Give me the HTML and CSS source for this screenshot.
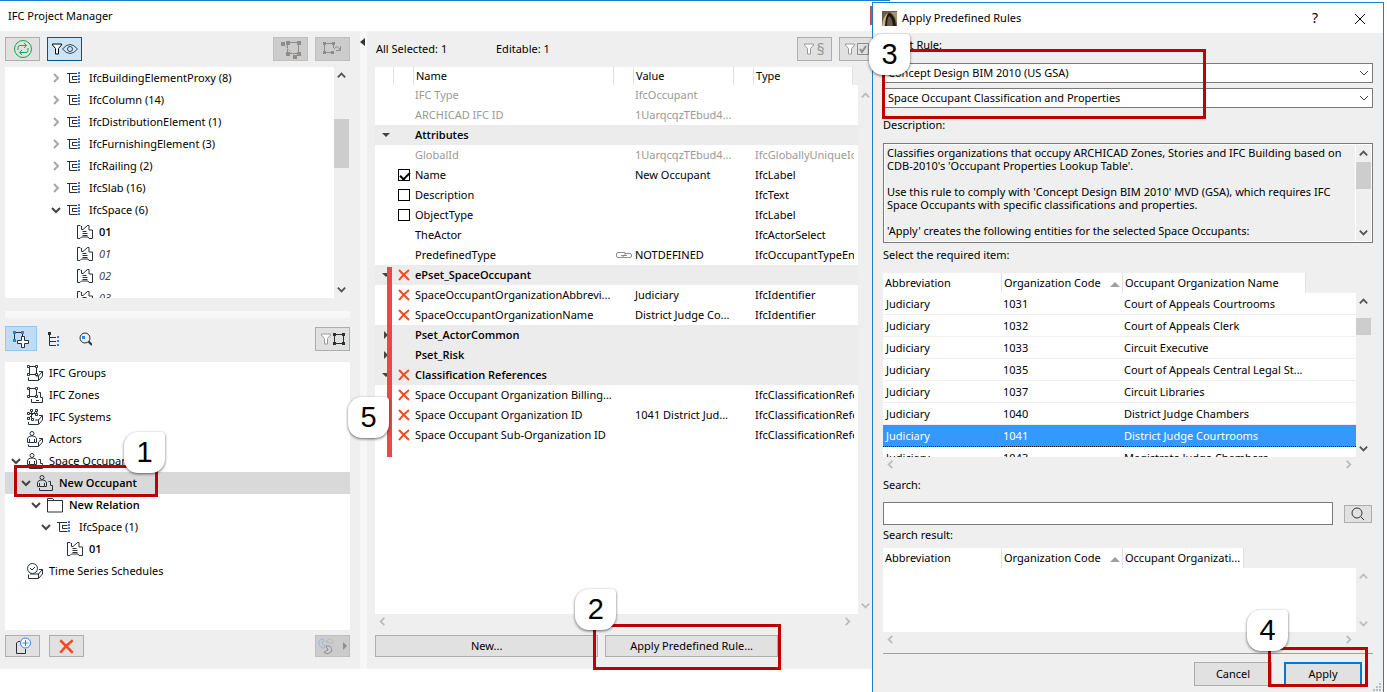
FILE: index.html
```html
<!DOCTYPE html>
<html lang="en">
<head>
  <meta charset="utf-8">
  <title>IFC Project Manager</title>
  <link rel="stylesheet" href="styles.css">
</head>
<body>
  <!-- Shared icons -->
  <svg class="sprite" aria-hidden="true">
    <symbol id="right" viewBox="0 0 12 12"><path d="M4 2l4 4-4 4" fill="none" stroke="currentColor" stroke-width="2"/></symbol>
    <symbol id="left" viewBox="0 0 12 12"><path d="M8 2L4 6l4 4" fill="none" stroke="currentColor" stroke-width="2"/></symbol>
    <symbol id="down" viewBox="0 0 12 12"><path d="M2 4l4 4 4-4" fill="none" stroke="currentColor" stroke-width="2"/></symbol>
    <symbol id="up" viewBox="0 0 12 12"><path d="M2 8l4-4 4 4" fill="none" stroke="currentColor" stroke-width="2"/></symbol>
    <symbol id="cross" viewBox="0 0 12 12"><path d="M1 1l10 10M11 1C7 4 4 7 1 11" fill="none" stroke="#f9481c" stroke-width="2"/></symbol>
    <symbol id="tri-down" viewBox="0 0 8 8"><path d="M0 2h8L4 6z" fill="#444"/></symbol>
    <symbol id="tri-right" viewBox="0 0 8 8"><path d="M2 0v8l4-4z" fill="#444"/></symbol>
    <symbol id="tree" viewBox="0 0 16 16">
      <path d="M0 3.500h10M2.500 3.500v9h8M5.500 6.500h5M5.500 6v3.500h5" fill="none" stroke="#263238"/>
      <path d="M11 2h2v2h-2zM11 5h2v2h-2zM11 8h2v2h-2zM11 11h2v2h-2z" fill="#2a7fff"/>
    </symbol>
    <symbol id="zone" viewBox="0 0 16 16">
      <path d="M4 2.500L3 1.500H.5v13H3l1.500-1.500H11l1 1.500h3.500V6H12V1.500h-1.500l-1 1M4.500 2v3.500H6L10.500 1.500M5.500 7.500h4M5.500 9.500h5M5.500 11.500h5" fill="none" stroke="#263238"/>
    </symbol>
    <symbol id="groups" viewBox="0 0 16 16">
      <path d="M2.500 1.500h7v8h-7z" fill="none" stroke="#263238"/>
      <path d="M.5.5h2v2h-2zM8.500.5h2v2h-2zM.5 8.500h2v2h-2zM8.500 8.500h2v2h-2z" fill="#fff" stroke="#263238"/>
      <path d="M1.500 12.500v3h10l4-4.500V6.500H12M11.500 15v-4l4-4.500M12 11H9" fill="none" stroke="#263238"/>
    </symbol>
    <symbol id="zones" viewBox="0 0 16 16">
      <path d="M2.500 1.500h7v8h-7z" fill="none" stroke="#263238"/>
      <path d="M.5.5h2v2h-2zM8.500.5h2v2h-2zM.5 8.500h2v2h-2zM8.500 8.500h2v2h-2z" fill="#fff" stroke="#263238"/>
      <path d="M4.500 12v3.500h11v-5h-2v-5h-2M9 13.500h3" fill="none" stroke="#263238"/>
    </symbol>
    <symbol id="systems" viewBox="0 0 16 16">
      <path d="M4.500 1v9M1 4.500h8M2 9l7-7M8 6l2-3" fill="none" stroke="#263238"/>
      <path d="M3.500.5h2v2h-2zM8.500.5h2v2h-2zM.5 3.500h2v2h-2zM8.500 4.500h2v2h-2zM.5 8.500h2v2h-2zM4.500 9.500h2v2h-2z" fill="#fff" stroke="#263238"/>
      <path d="M1.500 13v2.500h10l4-4.500V6.500H12M11.500 15v-4l4-4.500M12 11H8" fill="none" stroke="#263238"/>
    </symbol>
    <symbol id="actors" viewBox="0 0 16 16">
      <circle cx="5" cy="2.500" r="2" fill="none" stroke="#263238"/>
      <path d="M2.500 11.500H.5V8c0-4 9-4 9 0v3.500h-2M2.500 8v3.500h5V8M1.500 13.500v2h10l4-4.500V7.500H12M11.500 15v-4l4-3.500" fill="none" stroke="#263238"/>
    </symbol>
    <symbol id="occupant" viewBox="0 0 16 16">
      <circle cx="5" cy="2.500" r="2" fill="none" stroke="#263238"/>
      <path d="M2.500 11.500H.5V8c0-4 9-4 9 0v3.500h-2M2.500 8v3.500h5V8M2.500 13v2.500h13v-5h-2v-4h-2" fill="none" stroke="#263238"/>
    </symbol>
    <symbol id="folder" viewBox="0 0 16 16"><path d="M.5 15V1.500h5l2 2h8V15zM.5 3.500h7" fill="none" stroke="#263238"/></symbol>
    <symbol id="schedule" viewBox="0 0 16 16">
      <circle cx="5.500" cy="5.500" r="5" fill="none" stroke="#263238"/>
      <path d="M3 5l2 2 3-3M1.500 11.500v4h10l4-4.500V6.500H12M11.500 15v-4l4-4.500M12 11H3" fill="none" stroke="#263238"/>
    </symbol>
    <symbol id="funnel" viewBox="0 0 10 12"><path d="M.5 1h9v1L6.500 5.500V11h-3V5.500L.5 2z" fill="#fff" stroke="currentColor"/></symbol>
    <symbol id="frame" viewBox="0 0 12 12">
      <path d="M1.500 1.500h9v9h-9z" fill="none" stroke="currentColor"/>
      <path d="M0 0h3v3H0zM9 0h3v3H9zM0 9h3v3H0zM9 9h3v3H9z" fill="currentColor"/>
    </symbol>
  </svg>

  <main class="desktop">
    <section class="manager">
      <header class="titlebar">
        <h1>IFC Project Manager</h1>
        <span class="close-edge"></span>
      </header>

      <div class="manager-body">
        <div class="sidebar">
          <div class="toolbar">
            <button class="tool" aria-label="Refresh">
              <svg width="20" height="20" viewBox="0 0 20 20" fill="none" stroke="#12a84c"><circle cx="10" cy="10" r="8.500"/><path d="M5 11V8.500Q5 6.500 7 6.500h6M11 4l2.500 2.500L11 9M15 9v2.500q0 2-2 2H7M9 11l-2.500 2.500L9 16"/></svg>
            </button>
            <button class="tool active" aria-label="Filter visible">
              <svg class="funnel"><use href="#funnel"/></svg>
              <svg width="16" height="12" viewBox="0 0 16 12" fill="none" stroke="#37474f"><path d="M.5 6Q8-3 15.500 6 8 15 .5 6z"/><circle cx="8" cy="6" r="2.500"/></svg>
            </button>
            <span class="spacer"></span>
            <button class="tool disabled" disabled aria-label="Assign element">
              <svg width="22" height="20" viewBox="0 0 22 20"><path d="M7.500 3.500h11v11h-11z" fill="none" stroke="#8d8d8d"/><path d="M3 5l12 12" stroke="#8fb8ea"/><path d="M1 3h4v4H1zM6 2h4v4H6zM17 2h4v4h-4zM6 13h4v4H6zM17 13h4v4h-4zM13 16h4v4h-4z" fill="#8d8d8d"/></svg>
            </button>
            <button class="tool disabled" disabled aria-label="Move element">
              <svg width="20" height="14" viewBox="0 0 20 14"><path d="M10.500 6V1.500h-9v9H9" fill="none" stroke="#8d8d8d"/><path d="M0 0h3v3H0zM9 0h3v3H9zM0 9h3v3H0zM8 9h3v3H8z" fill="#8d8d8d"/><path d="M11 7q3-5 6 1M13 8.500h4.500V4" fill="none" stroke="#8d8d8d"/></svg>
            </button>
          </div>

          <div class="model-tree">
            <ul class="tree">
              <li class="lv4"><button class="twist" aria-label="Expand"><svg><use href="#right"/></svg></button><svg class="icon"><use href="#tree"/></svg>IfcBuildingElementProxy (8)</li>
              <li class="lv4"><button class="twist" aria-label="Expand"><svg><use href="#right"/></svg></button><svg class="icon"><use href="#tree"/></svg>IfcColumn (14)</li>
              <li class="lv4"><button class="twist" aria-label="Expand"><svg><use href="#right"/></svg></button><svg class="icon"><use href="#tree"/></svg>IfcDistributionElement (1)</li>
              <li class="lv4"><button class="twist" aria-label="Expand"><svg><use href="#right"/></svg></button><svg class="icon"><use href="#tree"/></svg>IfcFurnishingElement (3)</li>
              <li class="lv4"><button class="twist" aria-label="Expand"><svg><use href="#right"/></svg></button><svg class="icon"><use href="#tree"/></svg>IfcRailing (2)</li>
              <li class="lv4"><button class="twist" aria-label="Expand"><svg><use href="#right"/></svg></button><svg class="icon"><use href="#tree"/></svg>IfcSlab (16)</li>
              <li class="lv4"><button class="twist open" aria-label="Collapse"><svg><use href="#down"/></svg></button><svg class="icon"><use href="#tree"/></svg>IfcSpace (6)</li>
              <li class="lv5 leaf"><svg class="icon"><use href="#zone"/></svg><b>01</b></li>
              <li class="lv5 leaf"><svg class="icon"><use href="#zone"/></svg><i>01</i></li>
              <li class="lv5 leaf"><svg class="icon"><use href="#zone"/></svg><i>02</i></li>
              <li class="lv5 leaf"><svg class="icon"><use href="#zone"/></svg><i>03</i></li>
            </ul>
            <div class="vscroll">
              <button aria-label="Scroll up"><svg><use href="#up"/></svg></button>
              <span class="thumb thumb-tree"></span>
              <button aria-label="Scroll down"><svg><use href="#down"/></svg></button>
            </div>
          </div>

          <div class="hsplit"></div>

          <div class="toolbar tabs">
            <button class="tab active" aria-label="Assignments">
              <svg width="18" height="18" viewBox="0 0 18 18"><path d="M2.500 10V2.500h8V6" fill="none" stroke="#263238"/><path d="M1 1h3v3H1zM9 1h3v3H9zM1 9h3v3H1z" fill="#2a7fff"/><path d="M9.500 6.500h3v4h4v3h-4v4h-3v-4h-4v-3h4z" fill="#fff" stroke="#263238"/></svg>
            </button>
            <button class="tab" aria-label="Tree">
              <svg width="14" height="16" viewBox="0 0 14 16"><path d="M3.500 2v12.500H10M4 6.500h6M4 10.500h6" fill="none" stroke="#263238"/><path d="M2 1h3v3H2z" fill="#263238"/><path d="M11 5h2v2h-2zM11 9h2v2h-2zM11 13h2v2h-2z" fill="#2a7fff"/></svg>
            </button>
            <button class="tab" aria-label="Find">
              <svg width="14" height="16" viewBox="0 0 14 16"><circle cx="7" cy="7" r="5" fill="none" stroke="#263238"/><path d="M10.500 10.500L14 14" stroke="#263238" stroke-width="2"/><path d="M4 5h3v3H4z" fill="#2a7fff"/></svg>
            </button>
            <span class="spacer"></span>
            <button class="tool grey" aria-label="Filter frame">
              <svg class="funnel"><use href="#funnel"/></svg>
              <svg class="frame-icon"><use href="#frame"/></svg>
            </button>
          </div>

          <ul class="tree assign-tree">
            <li class="lv0 leaf"><svg class="icon"><use href="#groups"/></svg>IFC Groups</li>
            <li class="lv0 leaf"><svg class="icon"><use href="#zones"/></svg>IFC Zones</li>
            <li class="lv0 leaf"><svg class="icon"><use href="#systems"/></svg>IFC Systems</li>
            <li class="lv0 leaf"><svg class="icon"><use href="#actors"/></svg>Actors</li>
            <li class="lv0"><button class="twist open" aria-label="Collapse"><svg><use href="#down"/></svg></button><svg class="icon"><use href="#occupant"/></svg>Space Occupants</li>
            <li class="lv1 selected">
              <button class="twist open" aria-label="Collapse"><svg><use href="#down"/></svg></button><svg class="icon"><use href="#occupant"/></svg><b>New Occupant</b>
              <span class="mark mark-1"></span><span class="badge badge-1">1</span>
            </li>
            <li class="lv2"><button class="twist open" aria-label="Collapse"><svg><use href="#down"/></svg></button><svg class="icon"><use href="#folder"/></svg><b>New Relation</b></li>
            <li class="lv3"><button class="twist open" aria-label="Collapse"><svg><use href="#down"/></svg></button><svg class="icon"><use href="#tree"/></svg>IfcSpace (1)</li>
            <li class="lv4 leaf"><svg class="icon"><use href="#zone"/></svg><b>01</b></li>
            <li class="lv0 leaf"><svg class="icon"><use href="#schedule"/></svg>Time Series Schedules</li>
          </ul>

          <div class="toolbar actions">
            <button class="tool" aria-label="New item">
              <svg width="18" height="18" viewBox="0 0 18 18" fill="none"><path d="M6 4.500H4L2.500 6v10.500h9V12" stroke="#263238"/><circle cx="11.500" cy="6" r="5" fill="#fff" stroke="#2a7fff"/><path d="M8.500 6h6M11.500 3v6" stroke="#2a7fff"/></svg>
            </button>
            <button class="tool" aria-label="Delete item"><svg class="big-cross"><use href="#cross"/></svg></button>
            <span class="spacer"></span>
            <button class="tool disabled" disabled aria-label="Apply to">
              <svg width="32" height="18" viewBox="0 0 32 18" fill="none"><path d="M7 3C3 0 0 6 3 9c2 3 6 2 5 0L5 6z" stroke="#8fb8ea"/><path d="M9 5c2-5 8-3 7 1-2 1-4-1-7-1z" stroke="#b8b8b8"/><path d="M9 9c5-1 7 3 5 6-2 2-6 2-7 0l4-2z" stroke="#8d8d8d"/><path d="M26 5v8l4-4z" fill="#8d8d8d"/></svg>
            </button>
          </div>
        </div>

        <div class="vsplit"><svg width="5" height="8" viewBox="0 0 5 8"><path d="M5 0v8L0 4z" fill="#333"/></svg></div>

        <div class="details">
          <div class="toolbar counts">
            <span class="count">All Selected: 1</span>
            <span class="count">Editable: 1</span>
            <span class="spacer"></span>
            <button class="tool grey" aria-label="Filter schema"><svg class="funnel"><use href="#funnel"/></svg><span class="para">§</span></button>
            <button class="tool grey" aria-label="Filter checked"><svg class="funnel"><use href="#funnel"/></svg>
              <svg width="12" height="12" viewBox="0 0 12 12" fill="none" stroke="#8d8d8d"><path d="M.5.5h11v11H.5z"/><path d="M3 6l2 3 4-6" stroke-width="2"/></svg>
            </button>
          </div>

          <div class="prop-panel">
            <div class="prop-view">
              <table class="props">
                <colgroup><col class="c-twist"><col class="c-check"><col class="c-name"><col class="c-gap"><col class="c-value"><col class="c-gap"><col><col class="c-end"></colgroup>
                <thead>
                  <tr><th></th><th></th><th>Name</th><th></th><th>Value</th><th></th><th>Type</th><th class="blank"></th></tr>
                </thead>
                <tbody>
                  <tr class="muted"><td></td><td></td><td>IFC Type</td><td></td><td>IfcOccupant</td><td></td><td colspan="2"></td></tr>
                  <tr class="muted"><td></td><td></td><td>ARCHICAD IFC ID</td><td></td><td>1UarqcqzTEbud4...</td><td></td><td colspan="2"></td></tr>
                  <tr class="group"><td><svg class="tri"><use href="#tri-down"/></svg></td><td></td><td colspan="6">Attributes</td></tr>
                  <tr class="muted"><td></td><td></td><td>GlobalId</td><td></td><td>1UarqcqzTEbud4...</td><td></td><td colspan="2">IfcGloballyUniqueId</td></tr>
                  <tr><td></td><td><input type="checkbox" id="name" checked></td><td><label for="name">Name</label></td><td></td><td>New Occupant</td><td></td><td colspan="2">IfcLabel</td></tr>
                  <tr><td></td><td><input type="checkbox" id="description"></td><td><label for="description">Description</label></td><td></td><td></td><td></td><td colspan="2">IfcText</td></tr>
                  <tr><td></td><td><input type="checkbox" id="objecttype"></td><td><label for="objecttype">ObjectType</label></td><td></td><td></td><td></td><td colspan="2">IfcLabel</td></tr>
                  <tr><td></td><td></td><td>TheActor</td><td></td><td></td><td></td><td colspan="2">IfcActorSelect</td></tr>
                  <tr><td></td><td></td><td>PredefinedType</td><td><svg class="link" viewBox="0 0 16 8" fill="none" stroke="#8d8d8d"><path d="M7 6.500H2Q.5 6.500.5 5V3Q.5 1.500 2 1.500h7v3H5M9 2.500h5q1.500 0 1.500 1.500v1q0 1.500-1.500 1.500H7v-2h4"/></svg></td><td>NOTDEFINED</td><td></td><td colspan="2">IfcOccupantTypeEnum</td></tr>
                  <tr class="group"><td><svg class="tri"><use href="#tri-down"/></svg></td><td><svg class="cross"><use href="#cross"/></svg></td><td colspan="6">ePset_SpaceOccupant</td></tr>
                  <tr><td></td><td><svg class="cross"><use href="#cross"/></svg></td><td>SpaceOccupantOrganizationAbbrevi...</td><td></td><td>Judiciary</td><td></td><td colspan="2">IfcIdentifier</td></tr>
                  <tr><td></td><td><svg class="cross"><use href="#cross"/></svg></td><td>SpaceOccupantOrganizationName</td><td></td><td>District Judge Co...</td><td></td><td colspan="2">IfcIdentifier</td></tr>
                  <tr class="group"><td><svg class="tri"><use href="#tri-right"/></svg></td><td></td><td colspan="6">Pset_ActorCommon</td></tr>
                  <tr class="group"><td><svg class="tri"><use href="#tri-right"/></svg></td><td></td><td colspan="6">Pset_Risk</td></tr>
                  <tr class="group"><td><svg class="tri"><use href="#tri-down"/></svg></td><td><svg class="cross"><use href="#cross"/></svg></td><td colspan="6">Classification References</td></tr>
                  <tr><td></td><td><svg class="cross"><use href="#cross"/></svg></td><td>Space Occupant Organization Billing...</td><td></td><td></td><td></td><td colspan="2">IfcClassificationReference</td></tr>
                  <tr><td></td><td><svg class="cross"><use href="#cross"/></svg></td><td>Space Occupant Organization ID</td><td></td><td>1041 District Jud...</td><td></td><td colspan="2">IfcClassificationReference</td></tr>
                  <tr><td></td><td><svg class="cross"><use href="#cross"/></svg></td><td>Space Occupant Sub-Organization ID</td><td></td><td></td><td></td><td colspan="2">IfcClassificationReference</td></tr>
                </tbody>
              </table>
            </div>
            <div class="vscroll off below-head">
              <button aria-label="Scroll up"><svg><use href="#up"/></svg></button>
              <button aria-label="Scroll down"><svg><use href="#down"/></svg></button>
            </div>
            <span class="bar-5"></span><span class="badge badge-5">5</span>
          </div>
          <div class="hscroll">
            <button aria-label="Scroll left"><svg><use href="#left"/></svg></button>
            <button aria-label="Scroll right"><svg><use href="#right"/></svg></button>
          </div>

          <div class="rule-actions">
            <button class="push new">New...</button>
            <div class="callout">
              <button class="push apply-rule">Apply Predefined Rule...</button>
              <span class="mark mark-2"></span><span class="badge badge-2">2</span>
            </div>
          </div>
        </div>
      </div>
    </section>

    <section class="dialog">
      <header class="titlebar dialog-title">
        <svg width="15" height="15" viewBox="0 0 15 15"><path d="M0 0h15v15H0z" fill="#6b5d45"/><path d="M3 15Q3 5 7 2l1 0q5 3 6 13h-3Q10 6 7 5 5 8 5 15z" fill="#1d1813"/><path d="M0 15Q1 5 6 2 3 7 3 15z" fill="#c9b994"/><path d="M8 1h7v12Q13 4 8 1z" fill="#a39372"/></svg>
        <h2>Apply Predefined Rules</h2>
        <button class="caption help">?</button>
        <button class="caption" aria-label="Close"><svg width="12" height="12" viewBox="0 0 12 12"><path d="M1 1l10 10M11 1L1 11" stroke="#000"/></svg></button>
      </header>

      <div class="dialog-body">
        <label class="label" for="rule">Select Rule:</label>
        <div class="callout rules">
          <div class="drop">
            <select id="rule"><option>Concept Design BIM 2010 (US GSA)</option></select>
            <svg viewBox="0 0 10 6"><path d="M1 1l4 4 4-4" fill="none" stroke="#444"/></svg>
          </div>
          <div class="drop">
            <select aria-label="Rule type"><option>Space Occupant Classification and Properties</option></select>
            <svg viewBox="0 0 10 6"><path d="M1 1l4 4 4-4" fill="none" stroke="#444"/></svg>
          </div>
          <span class="mark mark-3"></span><span class="badge badge-3">3</span>
        </div>

        <label class="label desc-label" for="desc">Description:</label>
        <div class="desc">
          <textarea id="desc" readonly>Classifies organizations that occupy ARCHICAD Zones, Stories and IFC Building based on
CDB-2010's 'Occupant Properties Lookup Table'.

Use this rule to comply with 'Concept Design BIM 2010' MVD (GSA), which requires IFC
Space Occupants with specific classifications and properties.

'Apply' creates the following entities for the selected Space Occupants:</textarea>
          <div class="vscroll">
            <button aria-label="Scroll up"><svg><use href="#up"/></svg></button>
            <span class="thumb thumb-desc"></span>
            <button aria-label="Scroll down"><svg><use href="#down"/></svg></button>
          </div>
        </div>

        <p class="label items-label">Select the required item:</p>
        <div class="list">
          <div class="list-view items">
            <table class="orgs">
              <colgroup><col class="o-abbr"><col class="o-code"><col class="o-name"><col></colgroup>
              <thead>
                <tr><th>Abbreviation</th><th>Organization Code<i class="sort"></i></th><th>Occupant Organization Name</th><th class="blank"></th></tr>
              </thead>
              <tbody>
                <tr><td>Judiciary</td><td>1031</td><td colspan="2">Court of Appeals Courtrooms</td></tr>
                <tr><td>Judiciary</td><td>1032</td><td colspan="2">Court of Appeals Clerk</td></tr>
                <tr><td>Judiciary</td><td>1033</td><td colspan="2">Circuit Executive</td></tr>
                <tr><td>Judiciary</td><td>1035</td><td colspan="2">Court of Appeals Central Legal St...</td></tr>
                <tr><td>Judiciary</td><td>1037</td><td colspan="2">Circuit Libraries</td></tr>
                <tr><td>Judiciary</td><td>1040</td><td colspan="2">District Judge Chambers</td></tr>
                <tr class="selected"><td>Judiciary</td><td>1041</td><td colspan="2">District Judge Courtrooms</td></tr>
                <tr><td>Judiciary</td><td>1043</td><td colspan="2">Magistrate Judge Chambers</td></tr>
              </tbody>
            </table>
          </div>
          <div class="vscroll below-head">
            <button aria-label="Scroll up"><svg><use href="#up"/></svg></button>
            <span class="thumb thumb-items"></span>
            <button aria-label="Scroll down"><svg><use href="#down"/></svg></button>
          </div>
        </div>
        <div class="hscroll">
          <button aria-label="Scroll left"><svg><use href="#left"/></svg></button>
          <button aria-label="Scroll right"><svg><use href="#right"/></svg></button>
        </div>

        <label class="label search-label" for="search">Search:</label>
        <div class="search">
          <input type="text" id="search">
          <button class="push search-btn" aria-label="Search"><svg width="14" height="14" viewBox="0 0 14 14" fill="none" stroke="#333"><circle cx="6" cy="6" r="5"/><path d="M10 10l3 3"/></svg></button>
        </div>

        <p class="label result-label">Search result:</p>
        <div class="list">
          <div class="list-view results">
            <table class="orgs">
              <colgroup><col class="o-abbr"><col class="o-code"><col class="o-code"><col></colgroup>
              <thead>
                <tr><th>Abbreviation</th><th>Organization Code<i class="sort"></i></th><th>Occupant Organizati...</th><th class="blank"></th></tr>
              </thead>
            </table>
          </div>
          <div class="vscroll off below-head">
            <button aria-label="Scroll up"><svg><use href="#up"/></svg></button>
            <button aria-label="Scroll down"><svg><use href="#down"/></svg></button>
          </div>
        </div>
        <div class="hscroll">
          <button aria-label="Scroll left"><svg><use href="#left"/></svg></button>
          <button aria-label="Scroll right"><svg><use href="#right"/></svg></button>
        </div>

        <hr>
        <div class="dialog-actions">
          <button class="push">Cancel</button>
          <div class="callout">
            <button class="push default">Apply</button>
            <span class="mark mark-4"></span><span class="badge badge-4">4</span>
          </div>
        </div>
      </div>
      <svg class="grip" viewBox="0 0 8 8"><path d="M6 0h2v2H6zM3 3h2v2H3zM6 3h2v2H6zM0 6h2v2H0zM3 6h2v2H3zM6 6h2v2H6z" fill="#bbb"/></svg>
    </section>
  </main>
</body>
</html>
```
FILE: styles.css
```css
* {
  box-sizing: border-box;
}
body {
  margin: 0;
  background: #fff;
  color: #000;
  font-family: "Noto Sans", "Open Sans", sans-serif;
  font-size: 11px;
  line-height: 16px;
}
button, input, select, textarea {
  margin: 0;
  font: inherit;
  color: inherit;
}
button {
  padding: 0;
}
b {
  font-family: "Open Sans", "Noto Sans", sans-serif;
  font-weight: 600;
}
svg {
  flex: none;
}
ul, p, h1, h2 {
  margin: 0;
  padding: 0;
}
.sprite {
  position: absolute;
  width: 0;
  height: 0;
}
.desktop {
  display: flex;
  min-height: 100vh;
  overflow: hidden;
}

/* Window frames */
.manager {
  position: relative;
  display: flex;
  flex: 1;
  flex-direction: column;
  min-width: 0;
  margin-bottom: 23px;
}
.manager::before {
  content: "";
  position: absolute;
  top: 0;
  left: 0;
  right: -18px;
  height: 1px;
  background: #1a7fd0;
}
.titlebar {
  display: flex;
  align-items: center;
  height: 31px;
  padding-left: 8px;
  background: #fff;
}
.titlebar h1, .titlebar h2 {
  flex: 1;
  font-size: 11px;
  font-weight: normal;
}
.close-edge {
  width: 2px;
  height: 19px;
  background: #c75050;
}
.manager-body {
  display: flex;
  flex: 1;
  background: #efefef;
}
.sidebar {
  display: flex;
  flex: 0 0 360px;
  flex-direction: column;
  padding: 6px 10px 12px 5px;
}
.vsplit {
  width: 7px;
  padding-top: 3px;
  background: #f7f7f7;
}
.details {
  display: flex;
  flex: 1;
  flex-direction: column;
  min-width: 0;
  padding: 6px 0 12px 8px;
}

/* Buttons */
.toolbar {
  display: flex;
  align-items: center;
  gap: 7px;
}
.spacer {
  flex: 1;
}
.tool {
  display: flex;
  align-items: center;
  justify-content: center;
  width: 35px;
  height: 24px;
  border: 1px solid #adadad;
  background: #e1e1e1;
}
.tool.active {
  border-color: #005499;
  background: #cce4f7;
}
.tool.disabled {
  border-color: #bfbfbf;
  background: #ccc;
}
.tool.grey {
  gap: 2px;
  color: #999;
}
.funnel {
  width: 10px;
  height: 12px;
}
.frame-icon {
  width: 12px;
  height: 12px;
  color: #263238;
}
.para {
  font-size: 16px;
}
.tabs {
  gap: 0;
}
.tab {
  display: flex;
  align-items: center;
  justify-content: center;
  width: 32px;
  height: 25px;
  border: 1px solid transparent;
  background: none;
}
.tab.active {
  border-color: #90c8f6;
  background: #c0dcf3;
}
.actions {
  gap: 9px;
}
.actions .tool {
  height: 22px;
}
.big-cross {
  width: 15px;
  height: 15px;
}
.push {
  height: 22px;
  border: 1px solid #adadad;
  background: #e1e1e1;
}

/* Trees */
.tree {
  flex: 1;
  overflow: hidden;
  background: #fff;
  list-style: none;
}
.tree li {
  position: relative;
  display: flex;
  align-items: center;
  height: 22px;
  white-space: nowrap;
}
.tree .selected {
  background: #d9d9d9;
}
.tree .icon {
  width: 16px;
  height: 16px;
  margin-right: 6px;
}
.tree .leaf .icon {
  margin-left: 17px;
}
.tree i {
  color: #444;
}
.lv0 { padding-left: 5px; }
.lv1 { padding-left: 15px; }
.lv2 { padding-left: 25px; }
.lv3 { padding-left: 35px; }
.lv4 { padding-left: 45px; }
.lv5 { padding-left: 55px; }
.twist {
  display: flex;
  width: 12px;
  height: 12px;
  margin-right: 5px;
  border: 0;
  background: none;
  color: #a6a6a6;
}
.twist.open {
  color: #444;
}
.twist svg {
  width: 12px;
  height: 12px;
}
.model-tree {
  display: flex;
  height: 231px;
  margin-top: 6px;
}
.hsplit {
  height: 7px;
  margin: 13px 0 8px;
  background: #f7f7f7;
}
.assign-tree {
  margin: 11px 0 5px;
  overflow: visible;
}

/* Scroll bars */
.vscroll {
  display: flex;
  flex: none;
  flex-direction: column;
  justify-content: space-between;
  width: 16px;
  color: #555;
}
.vscroll button, .hscroll button {
  display: flex;
  align-items: center;
  justify-content: center;
  width: 15px;
  height: 17px;
  border: 0;
  background: none;
}
.vscroll svg, .hscroll svg {
  width: 11px;
  height: 11px;
}
.vscroll.off, .hscroll {
  color: #bdbdbd;
}
.thumb {
  width: 15px;
  margin-bottom: auto;
  background: #cdcdcd;
}
.thumb-tree {
  height: 49px;
  margin-top: 35px;
}
.thumb-desc {
  height: 27px;
}
.thumb-items {
  height: 17px;
  margin-top: 8px;
}
.below-head {
  padding-top: 20px;
}
.hscroll {
  display: flex;
  justify-content: space-between;
  height: 15px;
  padding-right: 17px;
}
.hscroll button {
  height: 15px;
}

/* Property table */
.counts {
  margin-right: -2px;
  padding-left: 1px;
}
.count {
  width: 113px;
}
.prop-panel {
  position: relative;
  display: flex;
  flex: 1;
  margin-top: 6px;
}
.prop-panel .vscroll {
  width: 14px;
}
.prop-view {
  flex: 1;
  min-width: 0;
  background: #fff;
}
table {
  width: 100%;
  table-layout: fixed;
  border-collapse: separate;
  border-spacing: 0;
}
th, td {
  padding: 0;
  text-align: left;
  white-space: nowrap;
}
th {
  padding-left: 2px;
  border-right: 1px solid #e2e2e2;
  font-weight: normal;
}
th.blank {
  border: 0;
  background: #efefef;
}
.props th {
  height: 18px;
}
.props td {
  height: 20px;
  padding-left: 1px;
  overflow: hidden;
}
.props td:last-child {
  border-right: 4px solid #fff;
}
.props .group td {
  border-color: #ececec;
  background: #ececec;
  font-family: "Open Sans", "Noto Sans", sans-serif;
  font-weight: 600;
}
.muted {
  color: #999;
}
.c-twist { width: 19px; }
.c-check { width: 20px; }
.c-name { width: 200px; }
.c-gap { width: 20px; }
.c-value { width: 100px; }
.c-end { width: 5px; }
.props svg, .props input {
  display: block;
}
.tri {
  width: 8px;
  height: 8px;
  margin-left: 6px;
}
.cross {
  width: 12px;
  height: 12px;
  margin-left: 3px;
}
.link {
  width: 16px;
  height: 8px;
  margin-left: 1px;
}
.props input {
  appearance: none;
  width: 12px;
  height: 12px;
  margin-left: 3px;
  border: 1px solid #000;
  background: #fff;
}
.props input:checked::before {
  content: "";
  display: block;
  width: 8px;
  height: 4px;
  margin: 2px 1px;
  border: solid #000;
  border-width: 0 0 2px 2px;
  transform: rotate(-45deg);
}
.rule-actions {
  display: flex;
  gap: 7px;
  margin-top: 6px;
  padding-right: 94px;
}
.new {
  flex: 223;
}
.rule-actions .callout {
  display: flex;
  flex: 174;
}
.apply-rule {
  flex: 1;
}

/* Rules dialog */
.dialog {
  position: relative;
  flex: 0 0 512px;
  margin: 2px 3px 0 0;
  border: 1px solid #1a7fd0;
  border-bottom: 0;
  background: #efefef;
}
.dialog-title {
  gap: 5px;
  height: 30px;
  padding: 0 3px 0 9px;
}
.caption {
  width: 40px;
  height: 28px;
  border: 0;
  background: none;
}
.caption svg {
  vertical-align: middle;
}
.help {
  font-size: 14px;
}
.dialog-body {
  padding: 4px 10px 0;
}
.label {
  display: block;
  margin-bottom: 10px;
}
.rules {
  display: grid;
  gap: 5px;
}
.drop {
  position: relative;
  display: flex;
}
.drop select {
  appearance: none;
  flex: 1;
  height: 20px;
  padding: 0 20px 0 4px;
  border: 1px solid #7a7a7a;
  border-radius: 0;
  background: #fff;
}
.drop svg {
  position: absolute;
  top: 7px;
  right: 4px;
  width: 10px;
  height: 6px;
}
.desc-label {
  margin-top: 9px;
}
.desc {
  display: flex;
  height: 100px;
  border: 1px solid #7a7a7a;
  outline: 1px solid #fff;
  outline-offset: -2px;
}
.desc textarea {
  flex: 1;
  padding: 2px 3px;
  border: 0;
  border-right: 1px solid #fff;
  background: none;
  line-height: 13px;
  overflow: hidden;
  white-space: pre;
  resize: none;
}
.desc .vscroll {
  padding: 1px 0;
}
.items-label {
  margin-top: 4px;
}
.list {
  display: flex;
  margin-right: 1px;
}
.list-view {
  flex: 1;
  min-width: 0;
  overflow: hidden;
  background: #fff;
}
.items {
  height: 184px;
}
.results {
  height: 84px;
}
.orgs th {
  height: 20px;
}
.orgs td {
  height: 22px;
  padding-left: 1px;
  border-bottom: 1px solid #efefef;
}
.orgs td:first-child {
  padding-left: 3px;
}
.orgs .selected td {
  border-top: 1px dotted #d07020;
  border-bottom: 1px dotted #000;
  background: #3399ff;
  color: #fff;
}
.o-abbr { width: 119px; }
.o-code { width: 121px; }
.o-name { width: 183px; }
.sort {
  float: right;
  margin: 7px 2px 0 0;
  border: solid transparent;
  border-width: 0 5px 5px;
  border-bottom-color: #a0a0a0;
}
.search-label {
  margin: 5px 0 9px;
}
.search {
  display: flex;
  align-items: center;
  gap: 11px;
  margin-right: 1px;
}
.search input {
  flex: 1;
  height: 23px;
  border: 1px solid #7a7a7a;
  background: #fff;
}
.search-btn {
  width: 28px;
  height: 18px;
}
.search-btn svg {
  display: block;
  margin: 0 auto;
}
.result-label {
  margin: 2px 0 5px;
}
hr {
  margin: 6px 0 8px;
  border: 0;
  border-top: 1px solid #a0a0a0;
}
.dialog-actions {
  display: flex;
  justify-content: flex-end;
  gap: 12px;
  padding-right: 11px;
}
.dialog-actions .push {
  width: 78px;
  height: 24px;
}
.push.default {
  border: 2px solid #0078d7;
}
.grip {
  position: absolute;
  right: 2px;
  bottom: 1px;
  width: 8px;
  height: 8px;
}

/* Step callouts */
.callout {
  position: relative;
}
.mark {
  position: absolute;
  z-index: 1;
  border: 3px solid #c00000;
}
.badge {
  position: absolute;
  z-index: 2;
  width: 41px;
  height: 41px;
  border-radius: 14px 4px 14px 14px;
  background: #fff;
  box-shadow: 0 1px 3px rgba(0, 0, 0, 0.6);
  font-family: "Liberation Sans", Arial, sans-serif;
  font-size: 29px;
  line-height: 40px;
  text-align: center;
}
.mark-1 {
  top: -7px;
  left: 9px;
  width: 144px;
  height: 32px;
}
.badge-1 {
  top: -40px;
  left: 119px;
}
.mark-2 {
  inset: -11px -3px -13px -12px;
}
.badge-2 {
  top: -46px;
  left: -30px;
}
.mark-3 {
  top: -14px;
  left: -1px;
  width: 324px;
  height: 70px;
}
.badge-3 {
  top: -29px;
  left: -14px;
}
.mark-4 {
  inset: -15px -6px -1px -16px;
}
.badge-4 {
  top: -52px;
  left: -37px;
}
.bar-5 {
  position: absolute;
  top: 200px;
  left: 12px;
  width: 5px;
  height: 190px;
  background: #e8484a;
}
.badge-5 {
  top: 330px;
  left: -27px;
}
```
